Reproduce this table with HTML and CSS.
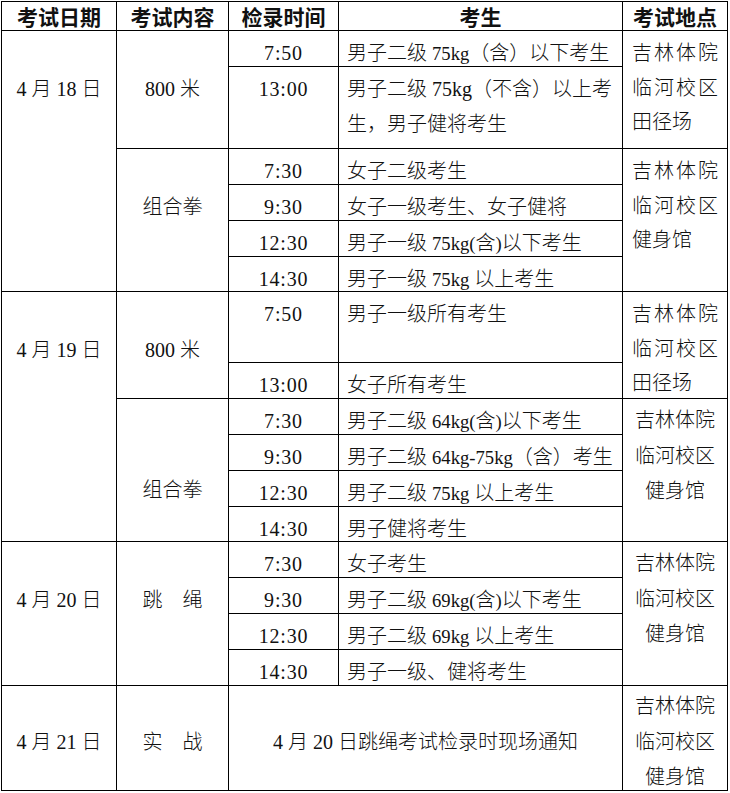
FILE: index.html
```html
<!DOCTYPE html>
<html lang="zh-CN">
<head>
<meta charset="utf-8">
<title>考试安排</title>
<link rel="stylesheet" href="styles.css">
</head>
<body>
<div class="sched">
  <div class="hd">考试日期</div>
  <div class="hd">考试内容</div>
  <div class="hd">检录时间</div>
  <div class="hd">考生</div>
  <div class="hd">考试地点</div>

  <div class="c ctr g1 rs6">4 月 18 日</div>
  <div class="c ctr g1 rs2">800 米</div>
  <div class="c ctr time">7:50</div>
  <div class="c">男子二级 <span class="lat">75kg</span>（含）以下考生</div>
  <div class="c loc rs2">吉林体院临河校区田径场</div>

  <div class="c ctr time">13:00</div>
  <div class="c">男子二级 75kg（不含）以上考生，男子健将考生</div>

  <div class="c ctr g1 rs4">组合拳</div>
  <div class="c ctr time">7:30</div>
  <div class="c">女子二级考生</div>
  <div class="c loc rs4">吉林体院临河校区健身馆</div>

  <div class="c ctr time">9:30</div>
  <div class="c">女子一级考生、女子健将</div>

  <div class="c ctr time">12:30</div>
  <div class="c">男子一级 <span class="lat">75kg(</span>含<span class="lat">)</span>以下考生</div>

  <div class="c ctr time">14:30</div>
  <div class="c">男子一级 <span class="lat">75kg</span> 以上考生</div>

  <div class="c ctr g1 rs6">4 月 19 日</div>
  <div class="c ctr g1 rs2">800 米</div>
  <div class="c ctr time">7:50</div>
  <div class="c">男子一级所有考生</div>
  <div class="c loc rs2">吉林体院临河校区田径场</div>

  <div class="c ctr time">13:00</div>
  <div class="c">女子所有考生</div>

  <div class="c ctr g2 rs4">组合拳</div>
  <div class="c ctr time">7:30</div>
  <div class="c">男子二级 <span class="lat">64kg(</span>含<span class="lat">)</span>以下考生</div>
  <div class="c locc rs4">吉林体院临河校区健身馆</div>

  <div class="c ctr time">9:30</div>
  <div class="c">男子二级 <span class="lat">64kg-75kg</span>（含）考生</div>

  <div class="c ctr time">12:30</div>
  <div class="c">男子二级 <span class="lat">75kg</span> 以上考生</div>

  <div class="c ctr time">14:30</div>
  <div class="c">男子健将考生</div>

  <div class="c ctr g1 rs4">4 月 20 日</div>
  <div class="c ctr g1 rs4">跳　绳</div>
  <div class="c ctr time">7:30</div>
  <div class="c">女子考生</div>
  <div class="c locc rs4">吉林体院临河校区健身馆</div>

  <div class="c ctr time">9:30</div>
  <div class="c">男子二级 <span class="lat">69kg(</span>含<span class="lat">)</span>以下考生</div>

  <div class="c ctr time">12:30</div>
  <div class="c">男子二级 <span class="lat">69kg</span> 以上考生</div>

  <div class="c ctr time">14:30</div>
  <div class="c">男子一级、健将考生</div>

  <div class="c ctr g3">4 月 21 日</div>
  <div class="c ctr g3">实　战</div>
  <div class="c ctr g3 cs2">4 月 20 日跳绳考试检录时现场通知</div>
  <div class="c locc last">吉林体院临河校区健身馆</div>
</div>
</body>
</html>
```

FILE: styles.css
```css
html, body {
  margin: 0;
  padding: 0;
  background: #fff;
}

body {
  font-family: "Liberation Serif", "Noto Sans CJK SC", serif;
  color: #111;
}

.sched {
  display: grid;
  grid-template-columns: 115px 112px 110px 284px 105px;
  grid-template-rows: 29px 36px 82px 36px 36px 36px 35px 71px 36px 36px 36px 36px 35px 36px 36px 36px 36px 105px;
  width: max-content;
  margin: 1px 0 0 1px;
  border-top: 1px solid #000;
  border-left: 1px solid #000;
}

.sched > div {
  box-sizing: border-box;
  border-right: 1px solid #000;
  border-bottom: 1px solid #000;
  min-width: 0;
  min-height: 0;
}

.hd {
  font-family: "Noto Sans CJK SC", sans-serif;
  font-weight: 700;
  font-size: 21px;
  line-height: 29px;
  text-align: center;
}

.c {
  font-size: 20px;
  line-height: 34.7px;
  font-weight: 300;
  padding: 5px 8px 0;
}

.ctr {
  text-align: center;
  padding-left: 0;
  padding-right: 0;
}

.g1 { padding-top: 41px; }
.g2 { padding-top: 74px; }
.g3 { padding-top: 39px; }

.time {
  letter-spacing: 0.8px;
}

.lat {
  font-size: 18.67px;
}

.loc {
  text-align: justify;
  padding: 5px 9px 0;
}

.locc {
  text-align: center;
  padding: 4px 11px 0;
  line-height: 35.5px;
}

.locc.last {
  padding-top: 3px;
}

.rs2 { grid-row: span 2; }
.rs4 { grid-row: span 4; }
.rs6 { grid-row: span 6; }
.cs2 { grid-column: span 2; }
```
